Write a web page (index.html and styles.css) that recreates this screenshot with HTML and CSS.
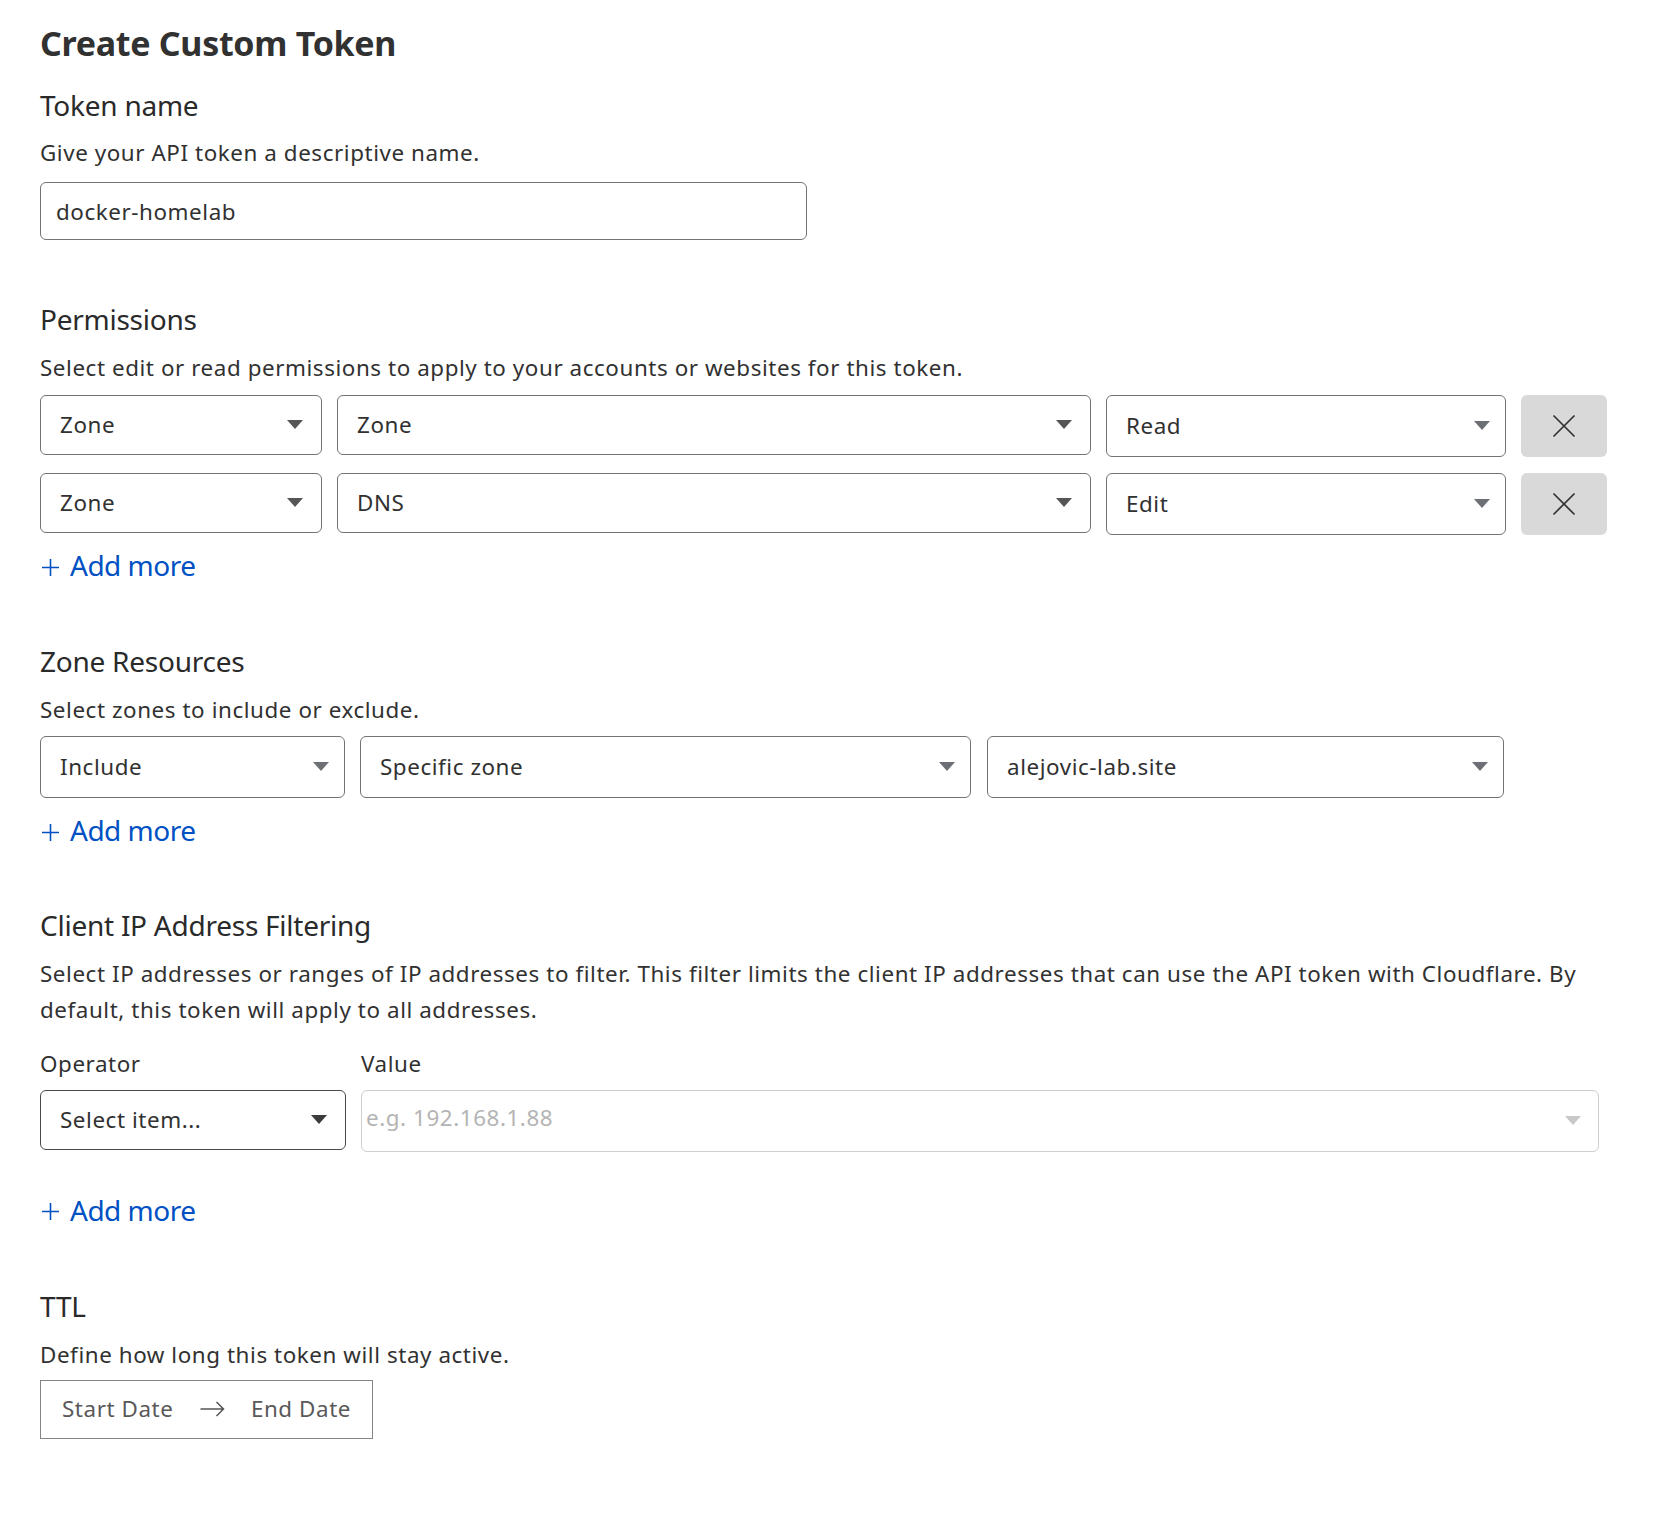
FILE: index.html
```html
<!DOCTYPE html>
<html lang="en">
<head>
<meta charset="utf-8">
<title>Create Custom Token</title>
<link rel="stylesheet" href="styles.css">
</head>
<body>
<main class="page">
  <h1 class="title">Create Custom Token</h1>

  <section class="section section-name">
    <h2 class="heading">Token name</h2>
    <p class="desc">Give your API token a descriptive name.</p>
    <div class="text-input">docker-homelab</div>
  </section>

  <section class="section section-perm">
    <h2 class="heading">Permissions</h2>
    <p class="desc">Select edit or read permissions to apply to your accounts or websites for this token.</p>
    <div class="perm-rows">
      <div class="perm-row">
        <div class="select select-dark"><span>Zone</span><span class="caret"></span></div>
        <div class="select select-dark"><span>Zone</span><span class="caret"></span></div>
        <div class="select select-light select-tall"><span>Read</span><span class="caret"></span></div>
        <button class="remove" type="button" aria-label="Remove"><svg width="24" height="24" viewBox="0 0 24 24"><path d="M1.5 1.5 L22.5 22.5 M22.5 1.5 L1.5 22.5" stroke="#333" stroke-width="1.7" fill="none"/></svg></button>
      </div>
      <div class="perm-row">
        <div class="select select-dark"><span>Zone</span><span class="caret"></span></div>
        <div class="select select-dark"><span>DNS</span><span class="caret"></span></div>
        <div class="select select-light select-tall"><span>Edit</span><span class="caret"></span></div>
        <button class="remove" type="button" aria-label="Remove"><svg width="24" height="24" viewBox="0 0 24 24"><path d="M1.5 1.5 L22.5 22.5 M22.5 1.5 L1.5 22.5" stroke="#333" stroke-width="1.7" fill="none"/></svg></button>
      </div>
    </div>
    <a class="add-more" href="#"><svg class="plus" width="17" height="17" viewBox="0 0 17 17"><path d="M8.5 0 V17 M0 8.5 H17" stroke="#0051c3" stroke-width="1.6" fill="none"/></svg><span>Add more</span></a>
  </section>

  <section class="section section-zone">
    <h2 class="heading">Zone Resources</h2>
    <p class="desc">Select zones to include or exclude.</p>
    <div class="zone-row">
      <div class="select select-light select-tall"><span>Include</span><span class="caret"></span></div>
      <div class="select select-light select-tall"><span>Specific zone</span><span class="caret"></span></div>
      <div class="select select-light select-tall"><span>alejovic-lab.site</span><span class="caret"></span></div>
    </div>
    <a class="add-more" href="#"><svg class="plus" width="17" height="17" viewBox="0 0 17 17"><path d="M8.5 0 V17 M0 8.5 H17" stroke="#0051c3" stroke-width="1.6" fill="none"/></svg><span>Add more</span></a>
  </section>

  <section class="section section-ip">
    <h2 class="heading">Client IP Address Filtering</h2>
    <p class="desc">Select IP addresses or ranges of IP addresses to filter. This filter limits the client IP addresses that can use the API token with Cloudflare. By default, this token will apply to all addresses.</p>
    <div class="ip-grid">
      <div class="label">Operator</div>
      <div class="label">Value</div>
      <div class="select select-operator"><span>Select item...</span><span class="caret"></span></div>
      <div class="value-field"><span class="placeholder">e.g. 192.168.1.88</span><span class="caret"></span></div>
    </div>
    <a class="add-more add-more-ip" href="#"><svg class="plus" width="17" height="17" viewBox="0 0 17 17"><path d="M8.5 0 V17 M0 8.5 H17" stroke="#0051c3" stroke-width="1.6" fill="none"/></svg><span>Add more</span></a>
  </section>

  <section class="section section-ttl">
    <h2 class="heading">TTL</h2>
    <p class="desc">Define how long this token will stay active.</p>
    <div class="date-range">
      <span>Start Date</span>
      <svg class="arrow" width="25" height="16" viewBox="0 0 25 16"><path d="M0.5 8 H23.5 M16.5 1 L23.5 8 L16.5 15" stroke="#555" stroke-width="1.5" fill="none"/></svg>
      <span>End Date</span>
    </div>
  </section>
</main>
</body>
</html>
```

FILE: styles.css
```css
* {
  box-sizing: border-box;
}

html,
body {
  margin: 0;
  background: #ffffff;
}

body {
  font-family: "Noto Sans", "Open Sans", sans-serif;
  font-size: 22.4px;
  line-height: 1.6;
  color: #313131;
  letter-spacing: 0.57px;
}

.page {
  padding: 22px 40px 80px 40px;
  width: 1669px;
}

.title {
  margin: 0;
  font-size: 34px;
  font-weight: 700;
  line-height: 42px;
  color: #313131;
  letter-spacing: -0.3px;
}

.heading {
  margin: 0;
  font-size: 28px;
  font-weight: 400;
  line-height: 33.6px;
  color: #2a2a2a;
  letter-spacing: -0.25px;
}

.desc {
  margin: 12.5px 0 0 0;
  width: 1567px;
}

.section-name {
  margin-top: 25px;
}

.section-perm {
  margin-top: 63px;
}

.section-zone {
  margin-top: 63px;
}

.section-ip {
  margin-top: 61px;
}

.section-ip .desc {
  margin-top: 14px;
}

.section-ttl {
  margin-top: 63px;
}

.section-ttl .desc {
  margin-top: 13px;
}

.text-input {
  margin-top: 11.5px;
  width: 767px;
  height: 58px;
  border: 1px solid #737373;
  border-radius: 6px;
  padding: 0 15px;
  display: flex;
  align-items: center;
}

/* selects */
.select {
  height: 60px;
  border: 1px solid #737373;
  border-radius: 6px;
  padding: 0 18px 0 19px;
  display: flex;
  align-items: center;
  justify-content: space-between;
  background: #fff;
}

.select-tall {
  height: 62px;
}

.caret {
  width: 0;
  height: 0;
  border-left: 8.5px solid transparent;
  border-right: 8.5px solid transparent;
  border-top: 9px solid #555555;
}

.select-light {
  padding-right: 15px;
}

.select-light .caret {
  border-top-color: #6c7075;
}

.perm-rows {
  margin-top: 9.5px;
  display: flex;
  flex-direction: column;
  gap: 16px;
}

.perm-row {
  display: grid;
  grid-template-columns: 282px 754px 400px 86px;
  column-gap: 15px;
  align-items: start;
}

.remove {
  height: 62px;
  width: 86px;
  border: 0;
  border-radius: 6px;
  background: #d9d9d9;
  display: flex;
  align-items: center;
  justify-content: center;
  padding: 0;
}

.add-more {
  margin-top: 14px;
  display: flex;
  align-items: center;
  gap: 11px;
  width: max-content;
  padding-left: 2px;
  font-size: 28px;
  line-height: 33.6px;
  color: #0051c3;
  text-decoration: none;
  letter-spacing: -0.5px;
}

.section-zone .add-more {
  margin-top: 16px;
}

.plus {
  margin-top: 3px;
}

.zone-row {
  margin-top: 8.5px;
  display: grid;
  grid-template-columns: 305px 611px 518px;
  column-gap: 15px;
}

.zone-row .select:nth-child(3) {
  margin-left: 1px;
}

.ip-grid {
  margin-top: 18px;
  display: grid;
  grid-template-columns: 306px 1238px;
  column-gap: 15px;
  row-gap: 8px;
}

.label {
  line-height: 1.6;
}

.select-operator {
  border-color: #4a4a4a;
  padding-right: 18px;
}

.select-operator .caret {
  border-top-color: #3c3c3c;
}

.value-field {
  height: 62px;
  border: 1px solid #cfcfcf;
  border-radius: 6px;
  padding: 0 17px 6px 4px;
  display: flex;
  align-items: center;
  justify-content: space-between;
}

.placeholder {
  color: #b4b4b4;
}

.value-field .caret {
  border-left-width: 8px;
  border-right-width: 8px;
  border-top: 9px solid #c8c8c8;
  margin-top: 6px;
}

.add-more-ip {
  margin-top: 42px;
}

.date-range {
  margin-top: 7px;
  width: 333px;
  height: 59px;
  border: 1px solid #858585;
  padding: 0 21px;
  display: flex;
  align-items: center;
  justify-content: space-between;
  color: #595959;
}
```
